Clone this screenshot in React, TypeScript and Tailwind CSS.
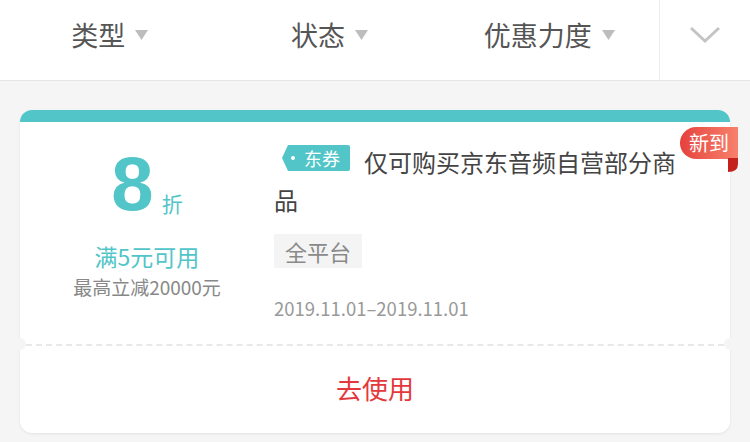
const cjk = { fontFamily: '"Noto Sans CJK SC", "Noto Sans", sans-serif' }

function Caret() {
	return (
		<svg width="13" height="10" viewBox="0 0 13 10" className="ml-[10px] mt-[2px]">
			<path d="M0 0 H13 L6.5 10 Z" fill="#bdbdbd" />
		</svg>
	)
}

function FilterTab({ label }: { label: string }) {
	return (
		<div className="flex flex-1 items-center justify-center">
			<span className="text-[27px] leading-none text-[#555]">{label}</span>
			<Caret />
		</div>
	)
}

export default function App() {
	return (
		<div style={cjk} className="h-[442px] w-[750px] overflow-hidden bg-[#f5f5f5]">
			<div className="flex h-[81px] border-b border-[#e6e6e6] bg-white">
				<div className="flex flex-1 pb-[12px]">
					<FilterTab label="类型" />
					<FilterTab label="状态" />
					<FilterTab label="优惠力度" />
				</div>
				<div className="flex w-[91px] items-center justify-center border-l border-[#ececec] pb-[10px]">
					<svg width="32" height="18" viewBox="0 0 32 18">
						<path d="M2 2 L16 15 L30 2" fill="none" stroke="#c4c4c4" strokeWidth="3" />
					</svg>
				</div>
			</div>

			<div className="px-[20px] pt-[29px]">
				<div className="relative rounded-[12px] bg-white shadow-[0_1px_3px_rgba(0,0,0,0.08)]">
					<div className="h-[12px] rounded-t-[12px] bg-[#52c5c8]" />
					<div className="flex h-[222px]">
						<div className="flex w-[254px] flex-col items-center pt-[18px]">
							<div className="flex items-end text-[#52c5c8]">
								<span
									style={{ fontFamily: '"Liberation Sans", Arial, sans-serif' }}
									className="text-[76px] font-bold leading-[88px]"
								>
									8
								</span>
								<span className="mb-[14px] ml-[8px] text-[21px] leading-none">折</span>
							</div>
							<div className="mt-[13px] text-[23px] leading-[30px] text-[#52c5c8]">满5元可用</div>
							<div className="mt-[3px] text-[19px] leading-[26px] text-[#888]">最高立减20000元</div>
						</div>
						<div className="flex-1 pr-[20px] pt-[21px]">
							<p className="text-[24px] leading-[38px] text-[#444]">
								<span className="ml-[8px] mr-[14px] inline-flex h-[26px] items-center align-[1px]">
									<svg width="10" height="26" viewBox="0 0 10 26" className="-mr-px">
										<path d="M10 0 H6 L0 13 L6 26 H10 Z" fill="#52c5c8" />
									</svg>
									<span className="flex h-[26px] items-center rounded-r-[2px] bg-[#52c5c8] pr-[10px] text-[18px] leading-none text-white">
										<span className="mr-[9px] h-[4px] w-[4px] rounded-full bg-white" />
										东券
									</span>
								</span>
								仅可购买京东音频自营部分商<br />品
							</p>
							<div className="mt-[15px] inline-block bg-[#f4f4f4] px-[11px] text-[22px] leading-[34px] text-[#8a8a8a]">
								全平台
							</div>
							<div className="mt-[27px] text-[18.5px] leading-[26px] text-[#999]">2019.11.01–2019.11.01</div>
						</div>
					</div>
					<div className="relative h-px">
						<div className="mx-[6px] border-t-2 border-dashed border-[#e8e8e8]" />
						<div className="absolute -left-[6px] -top-[6px] h-[12px] w-[12px] rounded-full bg-[#f5f5f5]" />
						<div className="absolute -right-[6px] -top-[6px] h-[12px] w-[12px] rounded-full bg-[#f5f5f5]" />
					</div>
					<div className="flex h-[88px] items-center justify-center pb-[3px] text-[26px] text-[#e4393c]">去使用</div>

					<div className="absolute -right-[8px] top-[17px]">
						<div className="flex h-[32px] w-[58px] items-center justify-center rounded-l-full rounded-tr-[10px] bg-gradient-to-r from-[#e5403c] to-[#f7806c] text-[20px] leading-none text-white">
							新到
						</div>
						<svg width="10" height="14" viewBox="0 0 10 14" className="ml-[48px] -mt-px">
							<path d="M0 0 H10 V6 Q10 14 0 14 Z" fill="#c4201d" />
						</svg>
					</div>
				</div>
			</div>
		</div>
	)
}
